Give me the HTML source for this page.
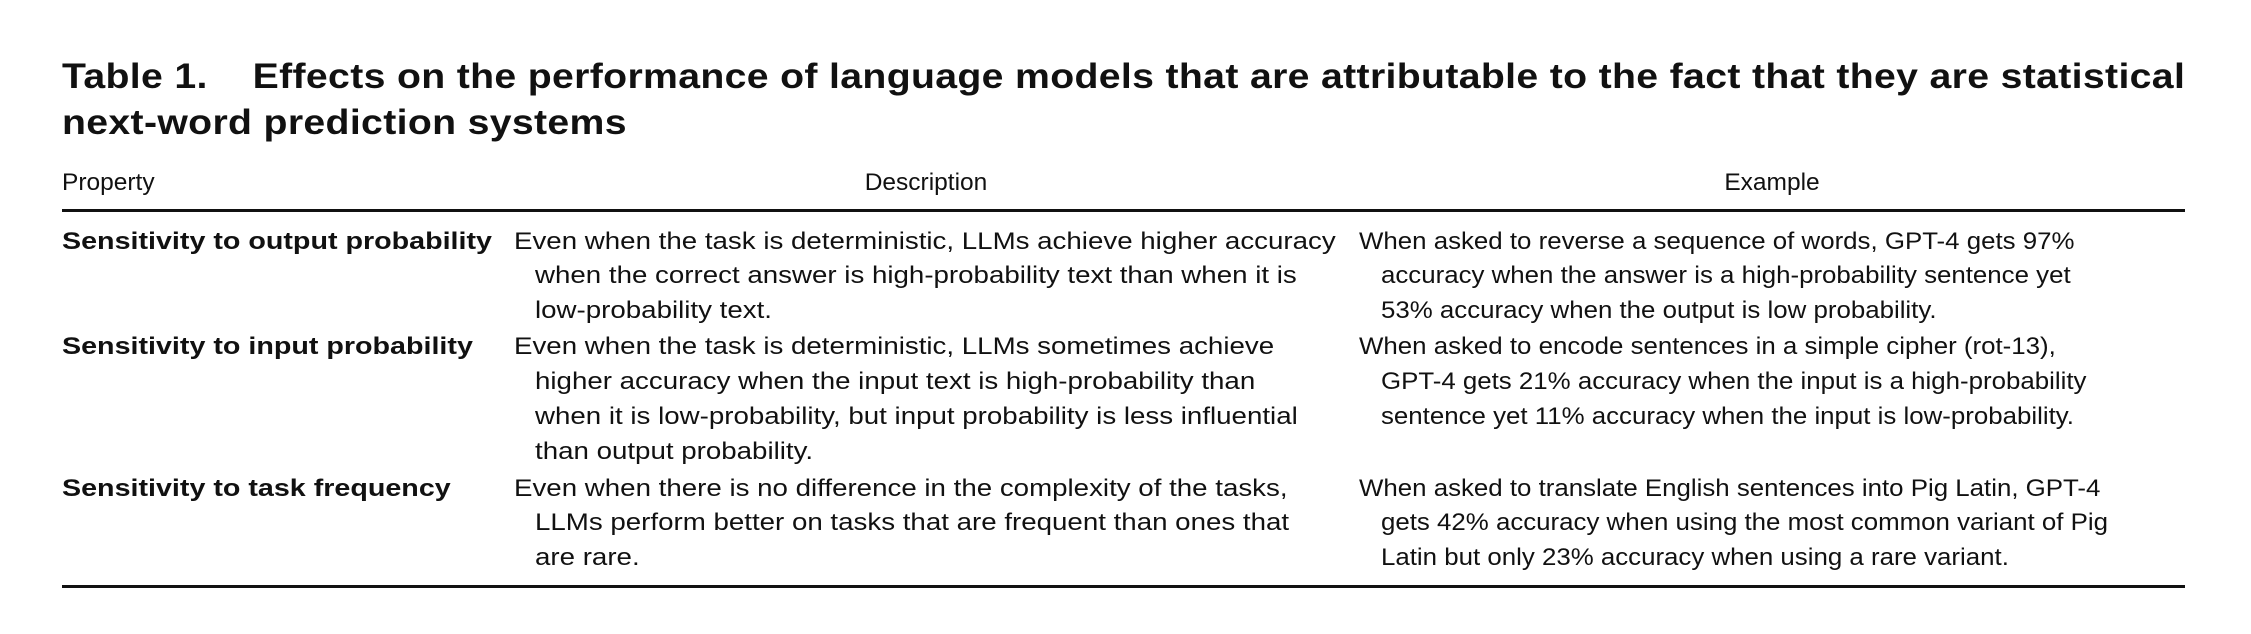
<!DOCTYPE html>
<html><head><meta charset="utf-8"><style>
html,body{margin:0;padding:0;background:#fff;}
body{width:2251px;height:634px;position:relative;overflow:hidden;font-family:"Liberation Sans",Arial,sans-serif;color:#111;}
.t{position:absolute;white-space:nowrap;font-size:24.5px;line-height:35px;transform-origin:0 0;}
.b{font-weight:bold;transform:scaleX(1.17);}
.d{transform:scaleX(1.13);}
.e{transform:scaleX(1.055);}
.ti{position:absolute;left:62px;white-space:nowrap;font-weight:bold;font-size:35px;line-height:46px;letter-spacing:0.3px;transform-origin:0 0;transform:scaleX(1.12);}
.rule{position:absolute;left:62px;width:2123px;height:3px;background:#111;}
</style></head><body>
<div class="ti" style="top:54px">Table 1.&nbsp;&nbsp;&nbsp; Effects on the performance of language models that are attributable to the fact that they are statistical</div>
<div class="ti" style="top:100px">next-word prediction systems</div>

<div class="t" style="left:62px;top:165px">Property</div>
<div class="t" style="left:826px;top:165px;width:200px;text-align:center">Description</div>
<div class="t" style="left:1672px;top:165px;width:200px;text-align:center">Example</div>
<div class="rule" style="top:209px"></div>

<div class="t b" style="left:62px;top:224px">Sensitivity to output probability</div>
<div class="t d" style="left:514px;top:224px">Even when the task is deterministic, LLMs achieve higher accuracy</div>
<div class="t d" style="left:535px;top:258px">when the correct answer is high-probability text than when it is</div>
<div class="t d" style="left:535px;top:293px">low-probability text.</div>
<div class="t e" style="left:1359px;top:224px">When asked to reverse a sequence of words, GPT-4 gets 97%</div>
<div class="t e" style="left:1381px;top:258px">accuracy when the answer is a high-probability sentence yet</div>
<div class="t e" style="left:1381px;top:293px">53% accuracy when the output is low probability.</div>

<div class="t b" style="left:62px;top:329px">Sensitivity to input probability</div>
<div class="t d" style="left:514px;top:329px">Even when the task is deterministic, LLMs sometimes achieve</div>
<div class="t d" style="left:535px;top:364px">higher accuracy when the input text is high-probability than</div>
<div class="t d" style="left:535px;top:399px">when it is low-probability, but input probability is less influential</div>
<div class="t d" style="left:535px;top:434px">than output probability.</div>
<div class="t e" style="left:1359px;top:329px">When asked to encode sentences in a simple cipher (rot-13),</div>
<div class="t e" style="left:1381px;top:364px">GPT-4 gets 21% accuracy when the input is a high-probability</div>
<div class="t e" style="left:1381px;top:399px">sentence yet 11% accuracy when the input is low-probability.</div>

<div class="t b" style="left:62px;top:471px">Sensitivity to task frequency</div>
<div class="t d" style="left:514px;top:471px">Even when there is no difference in the complexity of the tasks,</div>
<div class="t d" style="left:535px;top:505px">LLMs perform better on tasks that are frequent than ones that</div>
<div class="t d" style="left:535px;top:540px">are rare.</div>
<div class="t e" style="left:1359px;top:471px">When asked to translate English sentences into Pig Latin, GPT-4</div>
<div class="t e" style="left:1381px;top:505px">gets 42% accuracy when using the most common variant of Pig</div>
<div class="t e" style="left:1381px;top:540px">Latin but only 23% accuracy when using a rare variant.</div>

<div class="rule" style="top:585px"></div>
</body></html>
